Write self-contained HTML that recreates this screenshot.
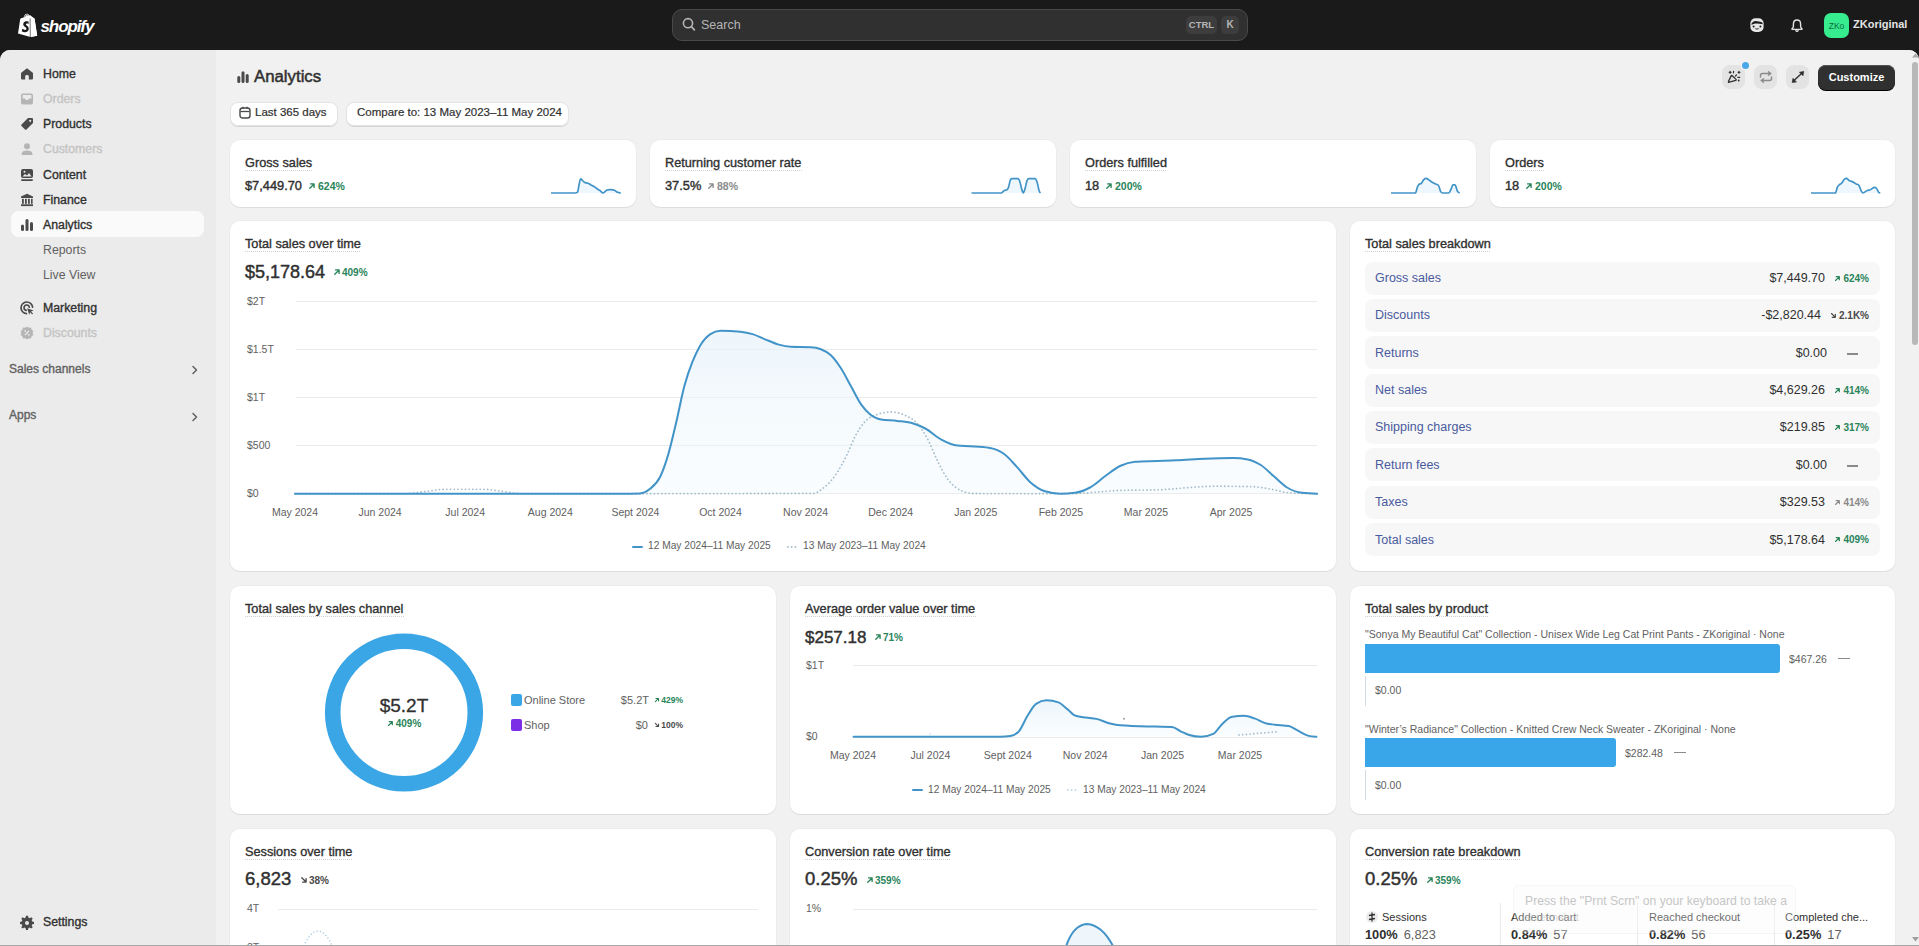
<!DOCTYPE html>
<html><head><meta charset="utf-8">
<style>
*{box-sizing:border-box;margin:0;padding:0}
html,body{width:1919px;height:946px;overflow:hidden;background:#1a1a1a;font-family:"Liberation Sans",sans-serif;color:#303030}
.abs{position:absolute}
#top{position:absolute;left:0;top:0;width:1919px;height:50px;background:#1a1a1a}
#frame{position:absolute;left:0;top:50px;width:1919px;height:896px;background:#f1f1f1;border-radius:10px 10px 0 0;overflow:hidden}
#side{position:absolute;left:0;top:0;width:216px;height:896px;background:#ebebeb}
.nav{position:absolute;left:11px;width:193px;height:26px;font-size:12.3px;-webkit-text-stroke:0.35px currentColor;font-weight:normal;color:#303030;line-height:29.2px;padding-left:32px;white-space:nowrap}
.nav.dis{color:#c4c4c4}
.nav.sub{font-weight:normal;color:#616161;-webkit-text-stroke:0}
.nav.sel{background:#fafafa;border-radius:8px}
.nav svg{position:absolute;left:9px;top:7px}
.card{position:absolute;background:#fff;border-radius:10px;box-shadow:0 1px 0 rgba(26,26,26,.07),0 0 0 1px rgba(0,0,0,.02)}
.ttl{position:absolute;font-size:13px;font-weight:bold;color:#303030;white-space:nowrap;border-bottom:1px dashed #d4d4d4;line-height:16px}
.t{position:absolute;white-space:nowrap}
.g{color:#29845a}
</style></head><body>
<div id="top">

  <svg class="abs" style="left:17px;top:13px" width="21" height="24" viewBox="0 0 21 24">
    <path d="M1 20.5 L3.2 6.2 Q3.4 5.4 4.2 5.2 L6.6 4.5 Q7.5 1 10 0.8 Q11.4 0.8 12 2.2 L13 2.2 L16.2 5.5 L17.5 5.6 L20.2 22.8 L13.5 24 Z" fill="#fff"/>
    <path d="M13 2.3 L13.2 24 L20.2 22.8 L17.5 5.6 Z" fill="#fff"/>
    <line x1="13.1" y1="5.5" x2="13.3" y2="24" stroke="#1a1a1a" stroke-width="0.6"/>
    <path d="M11.6 8.6 Q10.2 7.9 8.5 8.3 Q6 9 6.2 11.6 Q6.4 13.2 8.4 14.3 Q9.6 15 9.4 16 Q9 17.2 7.4 16.8 Q6.4 16.5 5.4 15.8 L4.7 18.2 Q6 19.3 8 19.3 Q11.4 19 11.8 16 Q12 13.9 9.8 12.6 Q8.6 11.8 8.9 11 Q9.3 10.2 10.8 10.6 L11.6 10.9 Z" fill="#1a1a1a"/>
    <path d="M7.6 4.2 Q8.3 1.8 9.9 1.6 Q10.8 1.7 11 2.6" fill="none" stroke="#1a1a1a" stroke-width="0.7"/>
  </svg>
  <div class="t" style="left:40.5px;top:16.5px;font-size:17px;font-weight:bold;font-style:italic;color:#fff;letter-spacing:-1.1px">shopify</div>
  <div class="abs" style="left:672px;top:9px;width:576px;height:32px;background:#303030;border:1px solid #4a4a4a;border-radius:10px"></div>
  <svg class="abs" style="left:682px;top:17px" width="14" height="15" viewBox="0 0 14 15"><circle cx="6" cy="6.2" r="4.6" fill="none" stroke="#b5b5b5" stroke-width="1.6"/><line x1="9.4" y1="9.6" x2="12.4" y2="12.8" stroke="#b5b5b5" stroke-width="1.7" stroke-linecap="round"/></svg>
  <div class="t" style="left:701px;top:17.5px;font-size:12.5px;color:#b5b5b5">Search</div>
  <div class="abs" style="left:1186px;top:16px;width:31px;height:18px;background:#3d3d3d;border-radius:5px;color:#b5b5b5;font-size:9.5px;font-weight:bold;text-align:center;line-height:18px">CTRL</div>
  <div class="abs" style="left:1221px;top:16px;width:18px;height:18px;background:#3d3d3d;border-radius:5px;color:#b5b5b5;font-size:10px;font-weight:bold;text-align:center;line-height:18px">K</div>
  <svg class="abs" style="left:1750px;top:18px" width="14" height="14" viewBox="0 0 14 14"><rect x="0.4" y="0.2" width="13.2" height="13.8" rx="5" fill="#e8e8e8"/><path d="M1.6 5.4 Q3.5 2.6 7 3.2 Q10.5 3.6 12.4 4.6 L12.6 6.2 Q9 5.4 5.5 5.6 Q3 5.9 1.6 7 Z" fill="#1a1a1a"/><circle cx="3.6" cy="8.4" r="1" fill="#1a1a1a"/><circle cx="10.4" cy="8.4" r="1" fill="#1a1a1a"/><path d="M4.6 10.2 Q7 12.6 9.4 10.2 Q7 10.8 4.6 10.2 Z" fill="#1a1a1a"/></svg>
  <svg class="abs" style="left:1790px;top:19px" width="14" height="14" viewBox="0 0 14 14"><path d="M7 1 Q3.4 1 3.4 5.2 V7.6 Q3.4 8.6 2.2 9.6 Q1.4 10.4 2.4 10.4 H11.6 Q12.6 10.4 11.8 9.6 Q10.6 8.6 10.6 7.6 V5.2 Q10.6 1 7 1 Z" fill="none" stroke="#e3e3e3" stroke-width="1.4" stroke-linejoin="round"/><path d="M5.6 11.2 Q7 13.6 8.4 11.2" fill="none" stroke="#e3e3e3" stroke-width="1.4"/></svg>
  <div class="abs" style="left:1824px;top:13px;width:25px;height:25px;background:#36ec8f;border-radius:7px;color:#0c6b3a;font-size:8.5px;text-align:center;line-height:26px">ZKo</div>
  <div class="t" style="left:1853px;top:18px;font-size:11px;font-weight:bold;color:#e3e3e3">ZKoriginal</div>
</div>
<div id="frame"><div id="side"></div></div>
<div class="nav " style="top:60px"><svg width="14" height="15" viewBox="0 0 14 15"><path d="M7 1.2 L1.5 5.6 Q1 6 1 6.7 V11.5 Q1 12.5 2 12.5 H5.2 V9 Q5.2 8 7 8 Q8.8 8 8.8 9 V12.5 H12 Q13 12.5 13 11.5 V6.7 Q13 6 12.5 5.6 Z" fill="#4a4a4a"/></svg>Home</div>
<div class="nav dis" style="top:85px"><svg width="14" height="15" viewBox="0 0 14 15"><path d="M3 1.5 H11 Q13 1.5 13 3.5 V10.5 Q13 12.5 11 12.5 H3 Q1 12.5 1 10.5 V3.5 Q1 1.5 3 1.5 Z M2.6 6.6 H4.8 L6 8 H8 L9.2 6.6 H11.4 V3.6 Q11.4 3.1 10.9 3.1 H3.1 Q2.6 3.1 2.6 3.6 Z" fill="#b5b5b5" fill-rule="evenodd"/></svg>Orders</div>
<div class="nav " style="top:110px"><svg width="14" height="15" viewBox="0 0 14 15"><path d="M8 1 H12 Q13 1 13 2 V6 L6.5 12.5 Q5.7 13.2 5 12.5 L1.5 9 Q0.8 8.3 1.5 7.5 Z" fill="#4a4a4a"/><circle cx="10.2" cy="3.8" r="1.1" fill="#ebebeb"/></svg>Products</div>
<div class="nav dis" style="top:135px"><svg width="14" height="15" viewBox="0 0 14 15"><circle cx="7" cy="4.2" r="3" fill="#b5b5b5"/><path d="M1.5 12.5 Q1.5 8.5 7 8.5 Q12.5 8.5 12.5 12.5 Q12.5 13 12 13 H2 Q1.5 13 1.5 12.5 Z" fill="#b5b5b5"/></svg>Customers</div>
<div class="nav " style="top:161px"><svg width="14" height="15" viewBox="0 0 14 15"><rect x="1" y="1" width="12" height="9" rx="2" fill="#4a4a4a"/><path d="M2.5 8.5 L5 6 L7 7.5 L9 5 L11.5 8.5 Z" fill="#ebebeb"/><circle cx="4.5" cy="3.8" r="1" fill="#ebebeb"/><rect x="1" y="11.3" width="12" height="1.6" rx=".8" fill="#4a4a4a"/></svg>Content</div>
<div class="nav " style="top:186px"><svg width="14" height="15" viewBox="0 0 14 15"><path d="M7 0.8 L13 3.6 V5 H1 V3.6 Z" fill="#4a4a4a"/><rect x="2" y="5.8" width="1.8" height="5" fill="#4a4a4a"/><rect x="5" y="5.8" width="1.8" height="5" fill="#4a4a4a"/><rect x="8" y="5.8" width="1.8" height="5" fill="#4a4a4a"/><rect x="11" y="5.8" width="1.6" height="5" fill="#4a4a4a"/><rect x="1" y="11.3" width="12" height="1.8" fill="#4a4a4a"/></svg>Finance</div>
<div class="nav sel" style="top:211px"><svg width="14" height="15" viewBox="0 0 14 15"><rect x="1" y="6.5" width="3" height="6.5" rx="1.5" fill="#4a4a4a"/><rect x="5.5" y="1" width="3" height="12" rx="1.5" fill="#4a4a4a"/><rect x="10" y="4" width="3" height="9" rx="1.5" fill="#4a4a4a"/></svg>Analytics</div>
<div class="nav sub" style="top:236px">Reports</div>
<div class="nav sub" style="top:261px">Live View</div>
<div class="nav " style="top:294px"><svg width="14" height="15" viewBox="0 0 14 15"><path d="M12.6 6.2 A5.8 5.8 0 1 0 6.4 12.6" fill="none" stroke="#4a4a4a" stroke-width="1.7" stroke-linecap="round"/><path d="M9.4 6.3 A2.7 2.7 0 1 0 6.3 9.4" fill="none" stroke="#4a4a4a" stroke-width="1.6" stroke-linecap="round"/><path d="M7.2 7.2 L13.6 9.4 L11 10.4 L13 12.6 L12.2 13.4 L10.2 11.2 L9.2 13.8 Z" fill="#4a4a4a"/></svg>Marketing</div>
<div class="nav dis" style="top:319px"><svg width="14" height="15" viewBox="0 0 14 15"><path d="M7 0.5 L8.8 1.8 L11 1.6 L11.6 3.7 L13.4 5 L12.6 7 L13.4 9 L11.6 10.3 L11 12.4 L8.8 12.2 L7 13.5 L5.2 12.2 L3 12.4 L2.4 10.3 L0.6 9 L1.4 7 L0.6 5 L2.4 3.7 L3 1.6 L5.2 1.8 Z" fill="#b5b5b5"/><path d="M5 9 L9 5" stroke="#ebebeb" stroke-width="1.2"/><circle cx="5.2" cy="5.2" r=".9" fill="#ebebeb"/><circle cx="8.8" cy="8.8" r=".9" fill="#ebebeb"/></svg>Discounts</div>
<div class="nav " style="top:908px"><svg width="14" height="15" viewBox="0 0 14 15"><path d="M6 0.8 H8 L8.4 2.6 L9.7 3.2 L11.3 2.2 L12.7 3.6 L11.7 5.2 L12.3 6.5 L14 6.9 V8.9 L12.3 9.3 L11.7 10.6 L12.7 12.2 L11.3 13.6 L9.7 12.6 L8.4 13.2 L8 15 H6 L5.6 13.2 L4.3 12.6 L2.7 13.6 L1.3 12.2 L2.3 10.6 L1.7 9.3 L0 8.9 V6.9 L1.7 6.5 L2.3 5.2 L1.3 3.6 L2.7 2.2 L4.3 3.2 L5.6 2.6 Z" fill="#4a4a4a"/><circle cx="7" cy="7.9" r="2" fill="#ebebeb"/></svg>Settings</div>
<div class="t" style="left:9px;top:361.5px;font-size:12px;color:#616161;-webkit-text-stroke:0.35px #616161">Sales channels</div>
<div class="t" style="left:9px;top:407.5px;font-size:12px;color:#616161;-webkit-text-stroke:0.35px #616161">Apps</div>
<svg class="abs" style="left:191px;top:365px" width="8" height="10" viewBox="0 0 8 10"><path d="M2 1.5 L5.5 5 L2 8.5" fill="none" stroke="#616161" stroke-width="1.5" stroke-linecap="round" stroke-linejoin="round"/></svg>
<svg class="abs" style="left:191px;top:412px" width="8" height="10" viewBox="0 0 8 10"><path d="M2 1.5 L5.5 5 L2 8.5" fill="none" stroke="#616161" stroke-width="1.5" stroke-linecap="round" stroke-linejoin="round"/></svg>

<svg class="abs" style="left:237px;top:71px" width="12" height="12" viewBox="0 0 12 12"><rect x="0.3" y="5" width="3" height="7" rx="1.5" fill="#4a4a4a"/><rect x="4.5" y="0.3" width="3" height="11.7" rx="1.5" fill="#4a4a4a"/><rect x="8.7" y="3" width="3" height="9" rx="1.5" fill="#4a4a4a"/></svg>
<div class="t" style="left:254px;top:69.28px;font-size:16.8px;line-height:16.8px;font-weight:normal;color:#303030;-webkit-text-stroke:0.5px #303030">Analytics</div>
<div class="abs" style="left:230px;top:102px;width:108px;height:24px;background:#fff;border-radius:8px;box-shadow:0 1px 0 #d4d4d4,0 0 0 1px #e3e3e3 inset"></div>
<svg class="abs" style="left:239px;top:106px" width="12" height="13" viewBox="0 0 12 13"><rect x="1" y="2" width="10" height="10" rx="2.5" fill="none" stroke="#4a4a4a" stroke-width="1.4"/><path d="M1.5 5.5 H10.5" stroke="#4a4a4a" stroke-width="1.3"/><path d="M4 0.8 V3 M8 0.8 V3" stroke="#4a4a4a" stroke-width="1.3"/></svg>
<div class="t" style="left:255px;top:107.27px;font-size:11.5px;line-height:11.5px;font-weight:normal;color:#303030;-webkit-text-stroke:0.2px #303030">Last 365 days</div>
<div class="abs" style="left:346px;top:102px;width:223px;height:24px;background:#fff;border-radius:8px;box-shadow:0 1px 0 #d4d4d4,0 0 0 1px #e3e3e3 inset"></div>
<div class="t" style="left:357px;top:107.27px;font-size:11.5px;line-height:11.5px;font-weight:normal;color:#303030;-webkit-text-stroke:0.2px #303030">Compare to: 13 May 2023–11 May 2024</div>
<div class="abs" style="left:1722px;top:65px;width:23px;height:24px;background:#e3e3e3;border-radius:8px"></div>
<div class="abs" style="left:1754px;top:65px;width:23px;height:24px;background:#e3e3e3;border-radius:8px"></div>
<div class="abs" style="left:1786px;top:65px;width:23px;height:24px;background:#e3e3e3;border-radius:8px"></div>
<svg class="abs" style="left:1727px;top:70px" width="14" height="14" viewBox="0 0 14 14"><path d="M2.3 12.2 Q1.1 12.6 1.5 11.4 L4.2 5.9 Q4.6 5.1 5.2 5.7 L9 9.4 Q9.6 10 8.8 10.3 Z" fill="none" stroke="#303030" stroke-width="1.3" stroke-linejoin="round"/><path d="M2.2 2.3 H4 M3.1 1.4 V3.2 M11.1 2.3 H12.9 M12 1.4 V3.2 M6.6 1.3 L6.4 2.9 M8.3 6.2 L9.5 5 M10.9 7.4 H12.7" stroke="#303030" stroke-width="1.2" stroke-linecap="round"/><circle cx="11.7" cy="10.5" r=".95" fill="#303030"/></svg>
<div class="abs" style="left:1742px;top:62px;width:7px;height:7px;background:#4ba8e8;border-radius:50%;box-shadow:0 0 0 1.5px #f1f1f1"></div>
<svg class="abs" style="left:1759px;top:71px" width="14" height="12" viewBox="0 0 14 12"><path d="M1.5 6 V4.5 Q1.5 2.5 3.5 2.5 H11.5 M9.5 0.8 L11.8 2.5 L9.5 4.2" fill="none" stroke="#8a8a8a" stroke-width="1.4" stroke-linecap="round" stroke-linejoin="round"/><path d="M12.5 6 V7.5 Q12.5 9.5 10.5 9.5 H2.5 M4.5 7.8 L2.2 9.5 L4.5 11.2" fill="none" stroke="#8a8a8a" stroke-width="1.4" stroke-linecap="round" stroke-linejoin="round"/></svg>
<svg class="abs" style="left:1791px;top:70px" width="14" height="14" viewBox="0 0 14 14"><path d="M2.4 11 L11.4 2.8" stroke="#303030" stroke-width="1.4" stroke-linecap="round"/><path d="M12.8 1.4 L8.4 2.2 L12 5.8 Z M1.2 12.6 L1.9 8.3 L5.5 11.9 Z" fill="#303030" stroke="#303030" stroke-width=".6" stroke-linejoin="round"/></svg>
<div class="abs" style="left:1818px;top:65px;width:77px;height:25px;background:#303030;border-radius:8px;box-shadow:0 1px 0 #000,inset 0 1px 0 #555"></div>
<div class="t" style="left:1656.5px;width:400px;text-align:center;top:71.69px;font-size:11px;line-height:11px;font-weight:bold;color:#ffffff;">Customize</div>
<div class="card" style="left:230px;top:140px;width:406px;height:67px"></div>
<div class="t" style="left:245px;top:156.93px;font-size:12.72px;line-height:12.72px;font-weight:normal;color:#303030;-webkit-text-stroke:0.35px #303030">Gross sales</div>
<div class="abs" style="left:245px;top:169.5px;width:68px;height:1px;background-image:linear-gradient(90deg,#d0d0d0 50%,transparent 50%);background-size:2px 1px"></div>
<div class="t" style="left:245px;top:179.66px;font-size:12.8px;line-height:12.8px;font-weight:normal;color:#303030;-webkit-text-stroke:0.4px #303030">$7,449.70</div>
<div class="t" style="left:308px;top:181.11px;font-size:10.5px;line-height:10.5px;font-weight:bold;color:#29845a;"><svg width="8" height="8" viewBox="0 0 10 10" style="vertical-align:baseline;margin-right:2px"><path d="M2.2 7.8 L7.6 2.4 M3.2 2.4 H7.6 V6.8" fill="none" stroke="#29845a" stroke-width="1.7" stroke-linecap="round" stroke-linejoin="round"/></svg>624%</div>
<div class="card" style="left:650px;top:140px;width:406px;height:67px"></div>
<div class="t" style="left:665px;top:156.93px;font-size:12.72px;line-height:12.72px;font-weight:normal;color:#303030;-webkit-text-stroke:0.35px #303030">Returning customer rate</div>
<div class="abs" style="left:665px;top:169.5px;width:137px;height:1px;background-image:linear-gradient(90deg,#d0d0d0 50%,transparent 50%);background-size:2px 1px"></div>
<div class="t" style="left:665px;top:179.66px;font-size:12.8px;line-height:12.8px;font-weight:normal;color:#303030;-webkit-text-stroke:0.4px #303030">37.5%</div>
<div class="t" style="left:707px;top:181.11px;font-size:10.5px;line-height:10.5px;font-weight:bold;color:#8a8a8a;"><svg width="8" height="8" viewBox="0 0 10 10" style="vertical-align:baseline;margin-right:2px"><path d="M2.2 7.8 L7.6 2.4 M3.2 2.4 H7.6 V6.8" fill="none" stroke="#8a8a8a" stroke-width="1.7" stroke-linecap="round" stroke-linejoin="round"/></svg>88%</div>
<div class="card" style="left:1070px;top:140px;width:406px;height:67px"></div>
<div class="t" style="left:1085px;top:156.93px;font-size:12.72px;line-height:12.72px;font-weight:normal;color:#303030;-webkit-text-stroke:0.35px #303030">Orders fulfilled</div>
<div class="abs" style="left:1085px;top:169.5px;width:82px;height:1px;background-image:linear-gradient(90deg,#d0d0d0 50%,transparent 50%);background-size:2px 1px"></div>
<div class="t" style="left:1085px;top:179.66px;font-size:12.8px;line-height:12.8px;font-weight:normal;color:#303030;-webkit-text-stroke:0.4px #303030">18</div>
<div class="t" style="left:1105px;top:181.11px;font-size:10.5px;line-height:10.5px;font-weight:bold;color:#29845a;"><svg width="8" height="8" viewBox="0 0 10 10" style="vertical-align:baseline;margin-right:2px"><path d="M2.2 7.8 L7.6 2.4 M3.2 2.4 H7.6 V6.8" fill="none" stroke="#29845a" stroke-width="1.7" stroke-linecap="round" stroke-linejoin="round"/></svg>200%</div>
<div class="card" style="left:1490px;top:140px;width:405px;height:67px"></div>
<div class="t" style="left:1505px;top:156.93px;font-size:12.72px;line-height:12.72px;font-weight:normal;color:#303030;-webkit-text-stroke:0.35px #303030">Orders</div>
<div class="abs" style="left:1505px;top:169.5px;width:39px;height:1px;background-image:linear-gradient(90deg,#d0d0d0 50%,transparent 50%);background-size:2px 1px"></div>
<div class="t" style="left:1505px;top:179.66px;font-size:12.8px;line-height:12.8px;font-weight:normal;color:#303030;-webkit-text-stroke:0.4px #303030">18</div>
<div class="t" style="left:1525px;top:181.11px;font-size:10.5px;line-height:10.5px;font-weight:bold;color:#29845a;"><svg width="8" height="8" viewBox="0 0 10 10" style="vertical-align:baseline;margin-right:2px"><path d="M2.2 7.8 L7.6 2.4 M3.2 2.4 H7.6 V6.8" fill="none" stroke="#29845a" stroke-width="1.7" stroke-linecap="round" stroke-linejoin="round"/></svg>200%</div>
<svg class="abs" style="left:550px;top:170px" width="80" height="30" viewBox="0 0 80 30"><path d="M1.0 23.0 C9.0 23.0 17.0 23.0 25.0 23.0 C25.8 23.0 26.7 22.8 27.5 22.3 C28.0 22.0 28.5 17.2 29.0 15.0 C29.5 12.7 30.1 8.8 30.6 8.8 C31.2 8.8 31.9 9.9 32.5 10.5 C33.1 11.1 33.7 11.9 34.3 12.2 C35.5 12.9 36.8 12.7 38.0 13.2 C39.4 13.8 40.7 14.9 42.1 15.6 C43.0 16.1 43.8 16.3 44.7 16.9 C45.6 17.5 46.4 18.4 47.3 19.0 C48.2 19.6 49.0 19.9 49.9 20.5 C50.9 21.2 52.0 23.0 53.0 23.0 C53.8 23.0 54.7 21.8 55.5 21.2 C56.2 20.7 57.0 19.8 57.7 19.8 C58.8 19.7 59.9 19.6 61.0 19.6 C62.3 19.6 63.7 19.9 65.0 20.5 C65.7 20.8 66.4 21.8 67.1 22.1 C68.3 22.7 69.6 22.9 70.8 23.0 L70.8 23 L1 23 Z" fill="#eaf5fc" opacity=".8"/><path d="M1.0 23.0 C9.0 23.0 17.0 23.0 25.0 23.0 C25.8 23.0 26.7 22.8 27.5 22.3 C28.0 22.0 28.5 17.2 29.0 15.0 C29.5 12.7 30.1 8.8 30.6 8.8 C31.2 8.8 31.9 9.9 32.5 10.5 C33.1 11.1 33.7 11.9 34.3 12.2 C35.5 12.9 36.8 12.7 38.0 13.2 C39.4 13.8 40.7 14.9 42.1 15.6 C43.0 16.1 43.8 16.3 44.7 16.9 C45.6 17.5 46.4 18.4 47.3 19.0 C48.2 19.6 49.0 19.9 49.9 20.5 C50.9 21.2 52.0 23.0 53.0 23.0 C53.8 23.0 54.7 21.8 55.5 21.2 C56.2 20.7 57.0 19.8 57.7 19.8 C58.8 19.7 59.9 19.6 61.0 19.6 C62.3 19.6 63.7 19.9 65.0 20.5 C65.7 20.8 66.4 21.8 67.1 22.1 C68.3 22.7 69.6 22.9 70.8 23.0" fill="none" stroke="#4294c8" stroke-width="1.7" stroke-linejoin="round"/></svg>
<svg class="abs" style="left:970px;top:170px" width="80" height="30" viewBox="0 0 80 30"><path d="M1.5 23.0 C11.4 23.0 21.3 23.0 31.2 23.0 C32.2 23.0 33.3 21.0 34.3 20.5 C35.2 20.0 36.0 20.2 36.9 19.8 C37.4 19.4 38.0 18.8 38.5 17.4 C39.2 15.7 39.8 10.4 40.5 9.6 C41.0 9.0 41.6 8.7 42.1 8.7 C44.0 8.7 45.9 8.7 47.8 8.7 C48.5 8.7 49.2 9.7 49.9 11.7 C50.4 13.2 51.0 16.6 51.5 18.4 C52.1 20.5 52.7 23.0 53.3 23.0 C53.9 23.0 54.5 20.3 55.1 18.4 C55.8 16.2 56.5 11.4 57.2 10.1 C57.7 9.1 58.3 8.7 58.8 8.7 C60.9 8.7 62.9 8.7 65.0 8.7 C65.7 8.7 66.4 10.1 67.1 12.2 C67.8 14.3 68.5 19.2 69.2 21.0 C69.6 22.1 70.1 22.6 70.5 23.0 L70.5 23 L1.5 23 Z" fill="#eaf5fc" opacity=".8"/><path d="M1.5 23.0 C11.4 23.0 21.3 23.0 31.2 23.0 C32.2 23.0 33.3 21.0 34.3 20.5 C35.2 20.0 36.0 20.2 36.9 19.8 C37.4 19.4 38.0 18.8 38.5 17.4 C39.2 15.7 39.8 10.4 40.5 9.6 C41.0 9.0 41.6 8.7 42.1 8.7 C44.0 8.7 45.9 8.7 47.8 8.7 C48.5 8.7 49.2 9.7 49.9 11.7 C50.4 13.2 51.0 16.6 51.5 18.4 C52.1 20.5 52.7 23.0 53.3 23.0 C53.9 23.0 54.5 20.3 55.1 18.4 C55.8 16.2 56.5 11.4 57.2 10.1 C57.7 9.1 58.3 8.7 58.8 8.7 C60.9 8.7 62.9 8.7 65.0 8.7 C65.7 8.7 66.4 10.1 67.1 12.2 C67.8 14.3 68.5 19.2 69.2 21.0 C69.6 22.1 70.1 22.6 70.5 23.0" fill="none" stroke="#4294c8" stroke-width="1.7" stroke-linejoin="round"/></svg>
<svg class="abs" style="left:1390px;top:170px" width="80" height="30" viewBox="0 0 80 30"><path d="M1.0 23.0 C9.1 23.0 17.3 23.0 25.4 23.0 C26.1 23.0 26.8 18.5 27.5 16.9 C28.0 15.8 28.5 14.7 29.0 14.3 C29.7 13.8 30.5 14.0 31.2 13.5 C32.1 12.9 32.9 10.4 33.8 9.6 C34.7 8.8 35.5 8.4 36.4 8.4 C37.3 8.4 38.1 9.5 39.0 10.1 C39.7 10.5 40.3 11.0 41.0 11.4 C42.8 12.5 44.5 13.4 46.3 14.3 C47.0 14.6 47.7 14.6 48.4 15.3 C49.2 16.0 49.9 20.4 50.7 21.6 C51.3 22.5 51.9 23.0 52.5 23.0 C54.6 23.0 56.7 23.0 58.8 23.0 C59.5 23.0 60.2 20.9 60.9 19.5 C61.6 18.1 62.3 14.8 63.0 14.8 C63.7 14.8 64.3 14.8 65.0 14.8 C65.9 14.8 66.7 20.4 67.6 21.6 C68.3 22.5 69.0 22.8 69.7 23.0 L69.7 23 L1 23 Z" fill="#eaf5fc" opacity=".8"/><path d="M1.0 23.0 C9.1 23.0 17.3 23.0 25.4 23.0 C26.1 23.0 26.8 18.5 27.5 16.9 C28.0 15.8 28.5 14.7 29.0 14.3 C29.7 13.8 30.5 14.0 31.2 13.5 C32.1 12.9 32.9 10.4 33.8 9.6 C34.7 8.8 35.5 8.4 36.4 8.4 C37.3 8.4 38.1 9.5 39.0 10.1 C39.7 10.5 40.3 11.0 41.0 11.4 C42.8 12.5 44.5 13.4 46.3 14.3 C47.0 14.6 47.7 14.6 48.4 15.3 C49.2 16.0 49.9 20.4 50.7 21.6 C51.3 22.5 51.9 23.0 52.5 23.0 C54.6 23.0 56.7 23.0 58.8 23.0 C59.5 23.0 60.2 20.9 60.9 19.5 C61.6 18.1 62.3 14.8 63.0 14.8 C63.7 14.8 64.3 14.8 65.0 14.8 C65.9 14.8 66.7 20.4 67.6 21.6 C68.3 22.5 69.0 22.8 69.7 23.0" fill="none" stroke="#4294c8" stroke-width="1.7" stroke-linejoin="round"/></svg>
<svg class="abs" style="left:1810px;top:170px" width="80" height="30" viewBox="0 0 80 30"><path d="M1.0 23.0 C9.1 23.0 17.3 23.0 25.4 23.0 C26.1 23.0 26.8 18.3 27.5 16.9 C28.2 15.5 28.9 15.1 29.6 14.5 C30.3 13.9 31.0 13.9 31.7 13.2 C32.6 12.3 33.4 10.0 34.3 9.3 C35.0 8.7 35.7 8.4 36.4 8.4 C37.3 8.4 38.1 9.9 39.0 10.4 C39.9 10.9 40.7 11.0 41.6 11.4 C43.2 12.1 44.7 13.2 46.3 14.0 C47.2 14.4 48.0 14.4 48.9 15.3 C49.6 16.0 50.3 19.2 51.0 20.5 C51.7 21.7 52.3 23.0 53.0 23.0 C54.4 23.0 55.8 21.0 57.2 20.5 C58.2 20.1 59.3 20.1 60.3 19.8 C61.7 19.2 63.1 17.4 64.5 17.4 C65.2 17.4 65.9 17.8 66.6 18.5 C67.3 19.2 68.0 21.9 68.7 22.4 C69.2 22.8 69.8 22.9 70.3 23.0 L70.3 23 L1 23 Z" fill="#eaf5fc" opacity=".8"/><path d="M1.0 23.0 C9.1 23.0 17.3 23.0 25.4 23.0 C26.1 23.0 26.8 18.3 27.5 16.9 C28.2 15.5 28.9 15.1 29.6 14.5 C30.3 13.9 31.0 13.9 31.7 13.2 C32.6 12.3 33.4 10.0 34.3 9.3 C35.0 8.7 35.7 8.4 36.4 8.4 C37.3 8.4 38.1 9.9 39.0 10.4 C39.9 10.9 40.7 11.0 41.6 11.4 C43.2 12.1 44.7 13.2 46.3 14.0 C47.2 14.4 48.0 14.4 48.9 15.3 C49.6 16.0 50.3 19.2 51.0 20.5 C51.7 21.7 52.3 23.0 53.0 23.0 C54.4 23.0 55.8 21.0 57.2 20.5 C58.2 20.1 59.3 20.1 60.3 19.8 C61.7 19.2 63.1 17.4 64.5 17.4 C65.2 17.4 65.9 17.8 66.6 18.5 C67.3 19.2 68.0 21.9 68.7 22.4 C69.2 22.8 69.8 22.9 70.3 23.0" fill="none" stroke="#4294c8" stroke-width="1.7" stroke-linejoin="round"/></svg>
<div class="card" style="left:230px;top:221px;width:1106px;height:350px"></div>
<div class="t" style="left:245px;top:237.93px;font-size:12.72px;line-height:12.72px;font-weight:normal;color:#303030;-webkit-text-stroke:0.35px #303030">Total sales over time</div>
<div class="abs" style="left:245px;top:250.5px;width:116px;height:1px;background-image:linear-gradient(90deg,#d0d0d0 50%,transparent 50%);background-size:2px 1px"></div>
<div class="t" style="left:245px;top:262.76px;font-size:18px;line-height:18px;font-weight:normal;color:#303030;-webkit-text-stroke:0.45px #303030">$5,178.64</div>
<div class="t" style="left:333px;top:267.54px;font-size:10px;line-height:10px;font-weight:bold;color:#29845a;"><svg width="8" height="8" viewBox="0 0 10 10" style="vertical-align:baseline;margin-right:1px"><path d="M2.2 7.8 L7.6 2.4 M3.2 2.4 H7.6 V6.8" fill="none" stroke="#29845a" stroke-width="1.7" stroke-linecap="round" stroke-linejoin="round"/></svg>409%</div>
<div class="t" style="left:247px;top:295.61px;font-size:10.5px;line-height:10.5px;font-weight:normal;color:#616161;">$2T</div>
<div class="abs" style="left:296px;top:301px;width:1021px;height:1px;background:#ebebeb"></div>
<div class="t" style="left:247px;top:343.61px;font-size:10.5px;line-height:10.5px;font-weight:normal;color:#616161;">$1.5T</div>
<div class="abs" style="left:296px;top:349px;width:1021px;height:1px;background:#ebebeb"></div>
<div class="t" style="left:247px;top:391.61px;font-size:10.5px;line-height:10.5px;font-weight:normal;color:#616161;">$1T</div>
<div class="abs" style="left:296px;top:397px;width:1021px;height:1px;background:#ebebeb"></div>
<div class="t" style="left:247px;top:439.61px;font-size:10.5px;line-height:10.5px;font-weight:normal;color:#616161;">$500</div>
<div class="abs" style="left:296px;top:445px;width:1021px;height:1px;background:#ebebeb"></div>
<div class="t" style="left:247px;top:487.61px;font-size:10.5px;line-height:10.5px;font-weight:normal;color:#616161;">$0</div>
<div class="abs" style="left:296px;top:493px;width:1021px;height:1px;background:#ebebeb"></div>
<div class="t" style="left:95.0px;width:400px;text-align:center;top:507.11px;font-size:10.5px;line-height:10.5px;font-weight:normal;color:#616161;">May 2024</div>
<div class="t" style="left:180.10000000000002px;width:400px;text-align:center;top:507.11px;font-size:10.5px;line-height:10.5px;font-weight:normal;color:#616161;">Jun 2024</div>
<div class="t" style="left:265.2px;width:400px;text-align:center;top:507.11px;font-size:10.5px;line-height:10.5px;font-weight:normal;color:#616161;">Jul 2024</div>
<div class="t" style="left:350.29999999999995px;width:400px;text-align:center;top:507.11px;font-size:10.5px;line-height:10.5px;font-weight:normal;color:#616161;">Aug 2024</div>
<div class="t" style="left:435.4px;width:400px;text-align:center;top:507.11px;font-size:10.5px;line-height:10.5px;font-weight:normal;color:#616161;">Sept 2024</div>
<div class="t" style="left:520.5px;width:400px;text-align:center;top:507.11px;font-size:10.5px;line-height:10.5px;font-weight:normal;color:#616161;">Oct 2024</div>
<div class="t" style="left:605.5999999999999px;width:400px;text-align:center;top:507.11px;font-size:10.5px;line-height:10.5px;font-weight:normal;color:#616161;">Nov 2024</div>
<div class="t" style="left:690.6999999999999px;width:400px;text-align:center;top:507.11px;font-size:10.5px;line-height:10.5px;font-weight:normal;color:#616161;">Dec 2024</div>
<div class="t" style="left:775.8px;width:400px;text-align:center;top:507.11px;font-size:10.5px;line-height:10.5px;font-weight:normal;color:#616161;">Jan 2025</div>
<div class="t" style="left:860.9000000000001px;width:400px;text-align:center;top:507.11px;font-size:10.5px;line-height:10.5px;font-weight:normal;color:#616161;">Feb 2025</div>
<div class="t" style="left:946.0px;width:400px;text-align:center;top:507.11px;font-size:10.5px;line-height:10.5px;font-weight:normal;color:#616161;">Mar 2025</div>
<div class="t" style="left:1031.1px;width:400px;text-align:center;top:507.11px;font-size:10.5px;line-height:10.5px;font-weight:normal;color:#616161;">Apr 2025</div>
<svg class="abs" style="left:0;top:0" width="1919" height="946" viewBox="0 0 1919 946">
<defs><linearGradient id="gf" x1="0" y1="0" x2="0" y2="1"><stop offset="0" stop-color="#e6f2fa" stop-opacity=".7"/><stop offset="1" stop-color="#eef7fc" stop-opacity=".3"/></linearGradient></defs>
<path d="M295.0 493.7 C403.3 493.7 511.7 493.7 620.0 493.7 C626.7 493.7 633.4 493.6 640.1 493.4 C643.4 493.3 646.8 491.6 650.1 488.8 C653.5 486.0 656.8 483.7 660.2 476.7 C662.9 471.2 665.5 463.6 668.2 454.6 C670.9 445.6 673.5 433.8 676.2 422.5 C678.9 411.1 681.6 396.4 684.3 386.3 C687.0 376.3 689.6 369.0 692.3 362.2 C695.0 355.3 697.7 349.7 700.4 345.2 C703.7 339.7 707.1 336.4 710.4 334.1 C713.7 331.8 717.1 330.7 720.4 330.7 C727.1 330.7 733.8 331.0 740.5 331.7 C744.5 332.1 748.6 332.9 752.6 334.1 C756.6 335.3 760.6 337.5 764.6 339.1 C769.3 341.0 774.0 343.3 778.7 344.6 C782.7 345.7 786.8 346.6 790.8 346.8 C797.5 347.1 804.1 346.9 810.8 347.2 C814.2 347.3 817.5 347.9 820.9 349.2 C824.2 350.5 827.6 352.0 830.9 355.2 C834.3 358.4 837.6 363.1 841.0 368.3 C844.3 373.5 847.7 380.3 851.0 386.3 C854.4 392.3 857.7 399.6 861.1 404.4 C863.8 408.2 866.4 411.1 869.1 413.5 C873.1 417.0 877.1 418.8 881.1 419.5 C886.5 420.4 891.8 420.2 897.2 420.9 C902.6 421.6 907.9 421.8 913.3 423.5 C917.3 424.7 921.3 426.4 925.3 428.5 C930.7 431.4 936.0 436.8 941.4 439.6 C946.8 442.5 952.1 445.0 957.5 445.6 C961.7 446.1 965.8 446.0 970.0 446.3 C976.3 446.7 982.5 446.8 988.8 447.8 C993.8 448.6 998.8 450.2 1003.8 453.8 C1008.2 456.9 1012.5 462.2 1016.9 466.9 C1021.3 471.6 1025.6 478.0 1030.0 481.9 C1035.0 486.4 1040.0 489.7 1045.0 491.3 C1050.0 492.9 1055.0 493.7 1060.0 493.7 C1065.0 493.7 1070.0 493.4 1075.0 492.8 C1080.0 492.2 1085.0 490.2 1090.0 487.5 C1095.0 484.8 1100.0 479.9 1105.0 476.3 C1110.0 472.7 1115.0 468.4 1120.0 466.0 C1125.0 463.6 1130.1 462.1 1135.1 461.7 C1142.6 461.2 1150.1 461.2 1157.6 460.9 C1163.9 460.7 1170.1 460.6 1176.4 460.3 C1185.8 459.9 1195.1 459.2 1204.5 458.8 C1213.9 458.4 1223.3 458.1 1232.7 458.1 C1237.7 458.1 1242.7 458.5 1247.7 459.4 C1252.1 460.2 1256.4 462.2 1260.8 465.0 C1265.2 467.8 1269.5 472.6 1273.9 476.3 C1278.3 480.1 1282.7 484.8 1287.1 487.5 C1292.1 490.6 1297.1 492.2 1302.1 492.8 C1307.1 493.4 1312.1 493.6 1317.1 493.7 L1316 493.5 L295 493.5 Z" fill="url(#gf)" transform="translate(0,0)" style="clip-path:inset(0)"/>
<path d="M295.0 493.7 C331.7 493.7 368.3 493.7 405.0 493.7 C411.7 493.7 418.3 492.2 425.0 491.5 C431.9 490.8 438.8 489.3 445.7 489.3 C458.2 489.3 470.7 489.3 483.2 489.3 C489.8 489.3 496.4 490.7 503.0 491.5 C509.0 492.2 515.0 493.7 521.0 493.7 C618.3 493.7 715.5 493.6 812.8 493.4 C816.8 493.4 820.9 490.2 824.9 486.8 C828.9 483.4 833.0 478.8 837.0 472.7 C840.3 467.6 843.7 461.4 847.0 454.6 C849.7 449.1 852.3 441.7 855.0 436.6 C858.4 430.1 861.7 425.1 865.1 421.5 C869.1 417.2 873.1 415.9 877.1 414.5 C881.8 412.8 886.5 412.0 891.2 412.0 C895.9 412.0 900.6 413.3 905.3 415.5 C909.3 417.4 913.3 419.0 917.3 423.5 C920.7 427.3 924.0 432.4 927.4 438.6 C930.7 444.8 934.1 454.0 937.4 460.7 C940.7 467.4 944.1 474.0 947.4 478.7 C952.1 485.3 956.8 488.7 961.5 490.8 C965.5 492.6 969.6 493.5 973.6 493.5 C1006.7 493.6 1039.9 493.7 1073.0 493.7 C1082.3 493.7 1091.7 492.3 1101.0 491.7 C1107.3 491.3 1113.7 490.6 1120.0 490.4 C1132.5 490.0 1145.1 490.2 1157.6 489.8 C1170.1 489.4 1182.5 487.9 1195.0 487.2 C1201.3 486.8 1207.7 486.2 1214.0 486.2 C1226.5 486.2 1238.9 486.3 1251.4 486.6 C1257.6 486.7 1263.8 488.0 1270.0 489.0 C1276.3 490.0 1282.7 492.4 1289.0 492.8 C1298.3 493.4 1307.7 493.6 1317.0 493.7" fill="none" stroke="#a3bccb" stroke-width="1.8" stroke-dasharray="0.01 3.7" stroke-linecap="round"/>
<path d="M295.0 493.7 C403.3 493.7 511.7 493.7 620.0 493.7 C626.7 493.7 633.4 493.6 640.1 493.4 C643.4 493.3 646.8 491.6 650.1 488.8 C653.5 486.0 656.8 483.7 660.2 476.7 C662.9 471.2 665.5 463.6 668.2 454.6 C670.9 445.6 673.5 433.8 676.2 422.5 C678.9 411.1 681.6 396.4 684.3 386.3 C687.0 376.3 689.6 369.0 692.3 362.2 C695.0 355.3 697.7 349.7 700.4 345.2 C703.7 339.7 707.1 336.4 710.4 334.1 C713.7 331.8 717.1 330.7 720.4 330.7 C727.1 330.7 733.8 331.0 740.5 331.7 C744.5 332.1 748.6 332.9 752.6 334.1 C756.6 335.3 760.6 337.5 764.6 339.1 C769.3 341.0 774.0 343.3 778.7 344.6 C782.7 345.7 786.8 346.6 790.8 346.8 C797.5 347.1 804.1 346.9 810.8 347.2 C814.2 347.3 817.5 347.9 820.9 349.2 C824.2 350.5 827.6 352.0 830.9 355.2 C834.3 358.4 837.6 363.1 841.0 368.3 C844.3 373.5 847.7 380.3 851.0 386.3 C854.4 392.3 857.7 399.6 861.1 404.4 C863.8 408.2 866.4 411.1 869.1 413.5 C873.1 417.0 877.1 418.8 881.1 419.5 C886.5 420.4 891.8 420.2 897.2 420.9 C902.6 421.6 907.9 421.8 913.3 423.5 C917.3 424.7 921.3 426.4 925.3 428.5 C930.7 431.4 936.0 436.8 941.4 439.6 C946.8 442.5 952.1 445.0 957.5 445.6 C961.7 446.1 965.8 446.0 970.0 446.3 C976.3 446.7 982.5 446.8 988.8 447.8 C993.8 448.6 998.8 450.2 1003.8 453.8 C1008.2 456.9 1012.5 462.2 1016.9 466.9 C1021.3 471.6 1025.6 478.0 1030.0 481.9 C1035.0 486.4 1040.0 489.7 1045.0 491.3 C1050.0 492.9 1055.0 493.7 1060.0 493.7 C1065.0 493.7 1070.0 493.4 1075.0 492.8 C1080.0 492.2 1085.0 490.2 1090.0 487.5 C1095.0 484.8 1100.0 479.9 1105.0 476.3 C1110.0 472.7 1115.0 468.4 1120.0 466.0 C1125.0 463.6 1130.1 462.1 1135.1 461.7 C1142.6 461.2 1150.1 461.2 1157.6 460.9 C1163.9 460.7 1170.1 460.6 1176.4 460.3 C1185.8 459.9 1195.1 459.2 1204.5 458.8 C1213.9 458.4 1223.3 458.1 1232.7 458.1 C1237.7 458.1 1242.7 458.5 1247.7 459.4 C1252.1 460.2 1256.4 462.2 1260.8 465.0 C1265.2 467.8 1269.5 472.6 1273.9 476.3 C1278.3 480.1 1282.7 484.8 1287.1 487.5 C1292.1 490.6 1297.1 492.2 1302.1 492.8 C1307.1 493.4 1312.1 493.6 1317.1 493.7" fill="none" stroke="#4294c8" stroke-width="2" stroke-linecap="round"/>
</svg>
<div class="abs" style="left:632px;top:546px;width:11px;height:2px;background:#4294c8;border-radius:1px"></div>
<div class="t" style="left:648px;top:541.37px;font-size:10.2px;line-height:10.2px;font-weight:normal;color:#616161;">12 May 2024–11 May 2025</div>
<svg class="abs" style="left:787px;top:545px" width="12" height="4"><path d="M1 2 H11" stroke="#a3bccb" stroke-width="1.8" stroke-dasharray="0.01 3.7" stroke-linecap="round"/></svg>
<div class="t" style="left:803px;top:541.37px;font-size:10.2px;line-height:10.2px;font-weight:normal;color:#616161;">13 May 2023–11 May 2024</div>
<div class="card" style="left:1350px;top:221px;width:545px;height:350px"></div>
<div class="t" style="left:1365px;top:237.93px;font-size:12.72px;line-height:12.72px;font-weight:normal;color:#303030;-webkit-text-stroke:0.35px #303030">Total sales breakdown</div>
<div class="abs" style="left:1365px;top:250.5px;width:126px;height:1px;background-image:linear-gradient(90deg,#d0d0d0 50%,transparent 50%);background-size:2px 1px"></div>
<div class="abs" style="left:1365px;top:262px;width:515px;height:33px;background:#f7f7f7;border-radius:8px"></div>
<div class="t" style="left:1375px;top:271.92px;font-size:12.5px;line-height:12.5px;font-weight:normal;color:#4a5a9e;">Gross sales</div>
<div class="t" style="right:50px;text-align:right;top:273.54px;font-size:10px;line-height:10px;font-weight:bold;color:#29845a;"><svg width="7" height="7" viewBox="0 0 10 10" style="vertical-align:baseline;margin-right:2px"><path d="M2.2 7.8 L7.6 2.4 M3.2 2.4 H7.6 V6.8" fill="none" stroke="#29845a" stroke-width="1.7" stroke-linecap="round" stroke-linejoin="round"/></svg>624%</div>
<div class="t" style="right:94px;text-align:right;top:271.92px;font-size:12.5px;line-height:12.5px;font-weight:normal;color:#303030;">$7,449.70</div>
<div class="abs" style="left:1365px;top:299px;width:515px;height:33px;background:#f7f7f7;border-radius:8px"></div>
<div class="t" style="left:1375px;top:309.29px;font-size:12.5px;line-height:12.5px;font-weight:normal;color:#4a5a9e;">Discounts</div>
<div class="t" style="right:50px;text-align:right;top:310.91px;font-size:10px;line-height:10px;font-weight:bold;color:#4a4a4a;"><svg width="7" height="7" viewBox="0 0 10 10" style="vertical-align:baseline;margin-right:2px"><path d="M2.2 2.2 L7.6 7.6 M3.2 7.6 H7.6 V3.2" fill="none" stroke="#4a4a4a" stroke-width="1.7" stroke-linecap="round" stroke-linejoin="round"/></svg>2.1K%</div>
<div class="t" style="right:98px;text-align:right;top:309.29px;font-size:12.5px;line-height:12.5px;font-weight:normal;color:#303030;">-$2,820.44</div>
<div class="abs" style="left:1365px;top:336px;width:515px;height:33px;background:#f7f7f7;border-radius:8px"></div>
<div class="t" style="left:1375px;top:346.66px;font-size:12.5px;line-height:12.5px;font-weight:normal;color:#4a5a9e;">Returns</div>
<div class="t" style="right:92px;text-align:right;top:346.66px;font-size:12.5px;line-height:12.5px;font-weight:normal;color:#303030;">$0.00</div>
<div class="abs" style="left:1847px;top:353px;width:11px;height:1.5px;background:#8a8a8a"></div>
<div class="abs" style="left:1365px;top:374px;width:515px;height:33px;background:#f7f7f7;border-radius:8px"></div>
<div class="t" style="left:1375px;top:384.03px;font-size:12.5px;line-height:12.5px;font-weight:normal;color:#4a5a9e;">Net sales</div>
<div class="t" style="right:50px;text-align:right;top:385.65px;font-size:10px;line-height:10px;font-weight:bold;color:#29845a;"><svg width="7" height="7" viewBox="0 0 10 10" style="vertical-align:baseline;margin-right:2px"><path d="M2.2 7.8 L7.6 2.4 M3.2 2.4 H7.6 V6.8" fill="none" stroke="#29845a" stroke-width="1.7" stroke-linecap="round" stroke-linejoin="round"/></svg>414%</div>
<div class="t" style="right:94px;text-align:right;top:384.03px;font-size:12.5px;line-height:12.5px;font-weight:normal;color:#303030;">$4,629.26</div>
<div class="abs" style="left:1365px;top:411px;width:515px;height:33px;background:#f7f7f7;border-radius:8px"></div>
<div class="t" style="left:1375px;top:421.40px;font-size:12.5px;line-height:12.5px;font-weight:normal;color:#4a5a9e;">Shipping charges</div>
<div class="t" style="right:50px;text-align:right;top:423.02px;font-size:10px;line-height:10px;font-weight:bold;color:#29845a;"><svg width="7" height="7" viewBox="0 0 10 10" style="vertical-align:baseline;margin-right:2px"><path d="M2.2 7.8 L7.6 2.4 M3.2 2.4 H7.6 V6.8" fill="none" stroke="#29845a" stroke-width="1.7" stroke-linecap="round" stroke-linejoin="round"/></svg>317%</div>
<div class="t" style="right:94px;text-align:right;top:421.40px;font-size:12.5px;line-height:12.5px;font-weight:normal;color:#303030;">$219.85</div>
<div class="abs" style="left:1365px;top:448px;width:515px;height:33px;background:#f7f7f7;border-radius:8px"></div>
<div class="t" style="left:1375px;top:458.77px;font-size:12.5px;line-height:12.5px;font-weight:normal;color:#4a5a9e;">Return fees</div>
<div class="t" style="right:92px;text-align:right;top:458.77px;font-size:12.5px;line-height:12.5px;font-weight:normal;color:#303030;">$0.00</div>
<div class="abs" style="left:1847px;top:465px;width:11px;height:1.5px;background:#8a8a8a"></div>
<div class="abs" style="left:1365px;top:486px;width:515px;height:33px;background:#f7f7f7;border-radius:8px"></div>
<div class="t" style="left:1375px;top:496.14px;font-size:12.5px;line-height:12.5px;font-weight:normal;color:#4a5a9e;">Taxes</div>
<div class="t" style="right:50px;text-align:right;top:497.75px;font-size:10px;line-height:10px;font-weight:bold;color:#8a8a8a;"><svg width="7" height="7" viewBox="0 0 10 10" style="vertical-align:baseline;margin-right:2px"><path d="M2.2 7.8 L7.6 2.4 M3.2 2.4 H7.6 V6.8" fill="none" stroke="#8a8a8a" stroke-width="1.7" stroke-linecap="round" stroke-linejoin="round"/></svg>414%</div>
<div class="t" style="right:94px;text-align:right;top:496.14px;font-size:12.5px;line-height:12.5px;font-weight:normal;color:#303030;">$329.53</div>
<div class="abs" style="left:1365px;top:523px;width:515px;height:33px;background:#f7f7f7;border-radius:8px"></div>
<div class="t" style="left:1375px;top:533.51px;font-size:12.5px;line-height:12.5px;font-weight:normal;color:#4a5a9e;">Total sales</div>
<div class="t" style="right:50px;text-align:right;top:535.12px;font-size:10px;line-height:10px;font-weight:bold;color:#29845a;"><svg width="7" height="7" viewBox="0 0 10 10" style="vertical-align:baseline;margin-right:2px"><path d="M2.2 7.8 L7.6 2.4 M3.2 2.4 H7.6 V6.8" fill="none" stroke="#29845a" stroke-width="1.7" stroke-linecap="round" stroke-linejoin="round"/></svg>409%</div>
<div class="t" style="right:94px;text-align:right;top:533.51px;font-size:12.5px;line-height:12.5px;font-weight:normal;color:#303030;">$5,178.64</div>
<div class="card" style="left:230px;top:586px;width:546px;height:228px"></div>
<div class="card" style="left:790px;top:586px;width:546px;height:228px"></div>
<div class="card" style="left:1350px;top:586px;width:545px;height:228px"></div>
<div class="t" style="left:245px;top:602.93px;font-size:12.72px;line-height:12.72px;font-weight:normal;color:#303030;-webkit-text-stroke:0.35px #303030">Total sales by sales channel</div>
<div class="abs" style="left:245px;top:615.5px;width:159px;height:1px;background-image:linear-gradient(90deg,#d0d0d0 50%,transparent 50%);background-size:2px 1px"></div>
<div class="t" style="left:805px;top:602.93px;font-size:12.72px;line-height:12.72px;font-weight:normal;color:#303030;-webkit-text-stroke:0.35px #303030">Average order value over time</div>
<div class="abs" style="left:805px;top:615.5px;width:171px;height:1px;background-image:linear-gradient(90deg,#d0d0d0 50%,transparent 50%);background-size:2px 1px"></div>
<div class="t" style="left:1365px;top:602.93px;font-size:12.72px;line-height:12.72px;font-weight:normal;color:#303030;-webkit-text-stroke:0.35px #303030">Total sales by product</div>
<div class="abs" style="left:1365px;top:615.5px;width:124px;height:1px;background-image:linear-gradient(90deg,#d0d0d0 50%,transparent 50%);background-size:2px 1px"></div>
<svg class="abs" style="left:304px;top:612px" width="200" height="200" viewBox="0 0 200 200"><circle cx="100" cy="100.5" r="71.3" fill="none" stroke="#3aa6e6" stroke-width="15.6"/></svg>
<div class="t" style="left:204px;width:400px;text-align:center;top:695.92px;font-size:19px;line-height:19px;font-weight:bold;color:#303030;font-weight:normal;-webkit-text-stroke:0.3px #303030">$5.2T</div>
<div class="t" style="left:204px;width:400px;text-align:center;top:718.53px;font-size:10px;line-height:10px;font-weight:bold;color:#29845a;"><svg width="7" height="7" viewBox="0 0 10 10" style="vertical-align:baseline;margin-right:2px"><path d="M2.2 7.8 L7.6 2.4 M3.2 2.4 H7.6 V6.8" fill="none" stroke="#29845a" stroke-width="1.7" stroke-linecap="round" stroke-linejoin="round"/></svg>409%</div>
<div class="abs" style="left:511px;top:694px;width:11px;height:12px;background:#3aa6e6;border-radius:2px"></div>
<div class="abs" style="left:511px;top:719px;width:11px;height:12px;background:#7b2ee6;border-radius:2px"></div>
<div class="t" style="left:524px;top:694.69px;font-size:11px;line-height:11px;font-weight:normal;color:#616161;">Online Store</div>
<div class="t" style="left:524px;top:719.69px;font-size:11px;line-height:11px;font-weight:normal;color:#616161;">Shop</div>
<div class="t" style="right:1270px;text-align:right;top:694.69px;font-size:11px;line-height:11px;font-weight:normal;color:#616161;">$5.2T</div>
<div class="t" style="right:1236px;text-align:right;top:696.30px;font-size:8.5px;line-height:8.5px;font-weight:bold;color:#29845a;"><svg width="6" height="6" viewBox="0 0 10 10" style="vertical-align:baseline;margin-right:1px"><path d="M2.2 7.8 L7.6 2.4 M3.2 2.4 H7.6 V6.8" fill="none" stroke="#29845a" stroke-width="1.7" stroke-linecap="round" stroke-linejoin="round"/></svg>429%</div>
<div class="t" style="right:1271px;text-align:right;top:719.69px;font-size:11px;line-height:11px;font-weight:normal;color:#616161;">$0</div>
<div class="t" style="right:1236px;text-align:right;top:721.30px;font-size:8.5px;line-height:8.5px;font-weight:bold;color:#4a4a4a;"><svg width="6" height="6" viewBox="0 0 10 10" style="vertical-align:baseline;margin-right:1px"><path d="M2.2 2.2 L7.6 7.6 M3.2 7.6 H7.6 V3.2" fill="none" stroke="#4a4a4a" stroke-width="1.7" stroke-linecap="round" stroke-linejoin="round"/></svg>100%</div>
<div class="t" style="left:805px;top:628.61px;font-size:17px;line-height:17px;font-weight:normal;color:#303030;-webkit-text-stroke:0.45px #303030">$257.18</div>
<div class="t" style="left:874px;top:632.53px;font-size:10px;line-height:10px;font-weight:bold;color:#29845a;"><svg width="8" height="8" viewBox="0 0 10 10" style="vertical-align:baseline;margin-right:1px"><path d="M2.2 7.8 L7.6 2.4 M3.2 2.4 H7.6 V6.8" fill="none" stroke="#29845a" stroke-width="1.7" stroke-linecap="round" stroke-linejoin="round"/></svg>71%</div>
<div class="t" style="left:806px;top:660.11px;font-size:10.5px;line-height:10.5px;font-weight:normal;color:#616161;">$1T</div>
<div class="t" style="left:806px;top:731.11px;font-size:10.5px;line-height:10.5px;font-weight:normal;color:#616161;">$0</div>
<div class="abs" style="left:853px;top:665px;width:464px;height:1px;background:#ebebeb"></div>
<div class="abs" style="left:853px;top:737px;width:464px;height:1px;background:#ebebeb"></div>
<div class="t" style="left:653.0px;width:400px;text-align:center;top:750.11px;font-size:10.5px;line-height:10.5px;font-weight:normal;color:#616161;">May 2024</div>
<div class="t" style="left:730.4px;width:400px;text-align:center;top:750.11px;font-size:10.5px;line-height:10.5px;font-weight:normal;color:#616161;">Jul 2024</div>
<div class="t" style="left:807.8px;width:400px;text-align:center;top:750.11px;font-size:10.5px;line-height:10.5px;font-weight:normal;color:#616161;">Sept 2024</div>
<div class="t" style="left:885.2px;width:400px;text-align:center;top:750.11px;font-size:10.5px;line-height:10.5px;font-weight:normal;color:#616161;">Nov 2024</div>
<div class="t" style="left:962.5999999999999px;width:400px;text-align:center;top:750.11px;font-size:10.5px;line-height:10.5px;font-weight:normal;color:#616161;">Jan 2025</div>
<div class="t" style="left:1040.0px;width:400px;text-align:center;top:750.11px;font-size:10.5px;line-height:10.5px;font-weight:normal;color:#616161;">Mar 2025</div>
<svg class="abs" style="left:0;top:0" width="1919" height="946" viewBox="0 0 1919 946">
<defs><linearGradient id="gf2" x1="0" y1="0" x2="0" y2="1"><stop offset="0" stop-color="#e3f1fa" stop-opacity=".7"/><stop offset="1" stop-color="#eef7fc" stop-opacity=".25"/></linearGradient></defs>
<path d="M853.6 736.8 C902.4 736.8 951.2 736.8 1000.0 736.8 C1003.4 736.8 1006.9 736.6 1010.3 736.1 C1013.2 735.7 1016.0 734.5 1018.9 731.3 C1021.8 728.1 1024.6 720.4 1027.5 715.8 C1030.4 711.2 1033.2 705.7 1036.1 703.8 C1039.5 701.5 1043.0 700.3 1046.4 700.3 C1050.4 700.3 1054.5 701.0 1058.5 702.4 C1061.4 703.4 1064.2 706.7 1067.1 708.9 C1070.0 711.1 1072.8 714.9 1075.7 715.8 C1079.1 716.9 1082.6 717.0 1086.0 717.5 C1089.4 718.0 1092.9 718.1 1096.3 718.9 C1100.9 719.9 1105.5 722.4 1110.1 723.5 C1113.5 724.3 1117.0 725.0 1120.4 725.3 C1131.9 726.2 1143.3 726.3 1154.8 726.6 C1160.5 726.8 1166.3 726.7 1172.0 727.0 C1174.9 727.1 1177.7 730.0 1180.6 731.3 C1183.5 732.6 1186.3 734.1 1189.2 735.0 C1193.2 736.2 1197.2 736.8 1201.2 736.8 C1205.2 736.8 1209.2 735.8 1213.2 733.9 C1216.1 732.5 1218.9 727.1 1221.8 724.4 C1225.3 721.1 1228.7 717.2 1232.2 716.7 C1236.2 716.1 1240.2 715.8 1244.2 715.8 C1247.6 715.8 1251.1 717.3 1254.5 718.4 C1258.5 719.7 1262.5 722.5 1266.5 723.5 C1269.4 724.2 1272.2 724.3 1275.1 724.7 C1279.7 725.3 1284.3 725.2 1288.9 726.1 C1291.8 726.7 1294.6 729.0 1297.5 730.4 C1300.9 732.1 1304.4 734.6 1307.8 735.6 C1310.7 736.4 1313.5 736.6 1316.4 736.8 L853.6 736.7 Z" fill="url(#gf2)"/>
<path d="M1239 735 L1277 731.8" fill="none" stroke="#a3bccb" stroke-width="1.8" stroke-dasharray="0.01 3.7" stroke-linecap="round"/>
<circle cx="930" cy="734" r=".8" fill="#b9d6e6"/><circle cx="1124" cy="718.7" r="1" fill="#a0a0a0"/>
<path d="M853.6 736.8 C902.4 736.8 951.2 736.8 1000.0 736.8 C1003.4 736.8 1006.9 736.6 1010.3 736.1 C1013.2 735.7 1016.0 734.5 1018.9 731.3 C1021.8 728.1 1024.6 720.4 1027.5 715.8 C1030.4 711.2 1033.2 705.7 1036.1 703.8 C1039.5 701.5 1043.0 700.3 1046.4 700.3 C1050.4 700.3 1054.5 701.0 1058.5 702.4 C1061.4 703.4 1064.2 706.7 1067.1 708.9 C1070.0 711.1 1072.8 714.9 1075.7 715.8 C1079.1 716.9 1082.6 717.0 1086.0 717.5 C1089.4 718.0 1092.9 718.1 1096.3 718.9 C1100.9 719.9 1105.5 722.4 1110.1 723.5 C1113.5 724.3 1117.0 725.0 1120.4 725.3 C1131.9 726.2 1143.3 726.3 1154.8 726.6 C1160.5 726.8 1166.3 726.7 1172.0 727.0 C1174.9 727.1 1177.7 730.0 1180.6 731.3 C1183.5 732.6 1186.3 734.1 1189.2 735.0 C1193.2 736.2 1197.2 736.8 1201.2 736.8 C1205.2 736.8 1209.2 735.8 1213.2 733.9 C1216.1 732.5 1218.9 727.1 1221.8 724.4 C1225.3 721.1 1228.7 717.2 1232.2 716.7 C1236.2 716.1 1240.2 715.8 1244.2 715.8 C1247.6 715.8 1251.1 717.3 1254.5 718.4 C1258.5 719.7 1262.5 722.5 1266.5 723.5 C1269.4 724.2 1272.2 724.3 1275.1 724.7 C1279.7 725.3 1284.3 725.2 1288.9 726.1 C1291.8 726.7 1294.6 729.0 1297.5 730.4 C1300.9 732.1 1304.4 734.6 1307.8 735.6 C1310.7 736.4 1313.5 736.6 1316.4 736.8" fill="none" stroke="#4294c8" stroke-width="2" stroke-linecap="round"/>
</svg>
<div class="abs" style="left:912px;top:789px;width:11px;height:2px;background:#4294c8;border-radius:1px"></div>
<div class="t" style="left:928px;top:785.37px;font-size:10.2px;line-height:10.2px;font-weight:normal;color:#616161;">12 May 2024–11 May 2025</div>
<svg class="abs" style="left:1067px;top:788px" width="12" height="4"><path d="M1 2 H11" stroke="#b9d6e6" stroke-width="1.8" stroke-dasharray="0.01 3.7" stroke-linecap="round"/></svg>
<div class="t" style="left:1083px;top:785.37px;font-size:10.2px;line-height:10.2px;font-weight:normal;color:#616161;">13 May 2023–11 May 2024</div>
<div class="t" style="left:1365px;top:629.11px;font-size:10.5px;line-height:10.5px;font-weight:normal;color:#616161;">"Sonya My Beautiful Cat" Collection - Unisex Wide Leg Cat Print Pants - ZKoriginal · None</div>
<div class="abs" style="left:1365px;top:644px;width:415px;height:29px;background:#38a6e8;border-radius:0 3px 3px 0"></div>
<div class="t" style="left:1789px;top:654.11px;font-size:10.5px;line-height:10.5px;font-weight:normal;color:#616161;">$467.26</div>
<div class="abs" style="left:1838px;top:658px;width:12px;height:1.2px;background:#8a8a8a"></div>
<div class="abs" style="left:1365px;top:676px;width:1px;height:30px;background:#d3dbe2"></div>
<div class="t" style="left:1375px;top:685.11px;font-size:10.5px;line-height:10.5px;font-weight:normal;color:#616161;">$0.00</div>
<div class="t" style="left:1365px;top:724.11px;font-size:10.5px;line-height:10.5px;font-weight:normal;color:#616161;">"Winter’s Radiance" Collection - Knitted Crew Neck Sweater - ZKoriginal · None</div>
<div class="abs" style="left:1365px;top:738px;width:251px;height:29px;background:#38a6e8;border-radius:0 3px 3px 0"></div>
<div class="t" style="left:1625px;top:748.11px;font-size:10.5px;line-height:10.5px;font-weight:normal;color:#616161;">$282.48</div>
<div class="abs" style="left:1674px;top:752px;width:12px;height:1.2px;background:#8a8a8a"></div>
<div class="abs" style="left:1365px;top:770px;width:1px;height:30px;background:#d3dbe2"></div>
<div class="t" style="left:1375px;top:780.11px;font-size:10.5px;line-height:10.5px;font-weight:normal;color:#616161;">$0.00</div>
<div class="card" style="left:230px;top:829px;width:546px;height:131px"></div>
<div class="card" style="left:790px;top:829px;width:546px;height:131px"></div>
<div class="card" style="left:1350px;top:829px;width:545px;height:131px"></div>
<div class="t" style="left:245px;top:845.93px;font-size:12.72px;line-height:12.72px;font-weight:normal;color:#303030;-webkit-text-stroke:0.35px #303030">Sessions over time</div>
<div class="abs" style="left:245px;top:858.5px;width:108px;height:1px;background-image:linear-gradient(90deg,#d0d0d0 50%,transparent 50%);background-size:2px 1px"></div>
<div class="t" style="left:805px;top:845.93px;font-size:12.72px;line-height:12.72px;font-weight:normal;color:#303030;-webkit-text-stroke:0.35px #303030">Conversion rate over time</div>
<div class="abs" style="left:805px;top:858.5px;width:146px;height:1px;background-image:linear-gradient(90deg,#d0d0d0 50%,transparent 50%);background-size:2px 1px"></div>
<div class="t" style="left:1365px;top:845.93px;font-size:12.72px;line-height:12.72px;font-weight:normal;color:#303030;-webkit-text-stroke:0.35px #303030">Conversion rate breakdown</div>
<div class="abs" style="left:1365px;top:858.5px;width:156px;height:1px;background-image:linear-gradient(90deg,#d0d0d0 50%,transparent 50%);background-size:2px 1px"></div>
<div class="t" style="left:245px;top:870.34px;font-size:18.5px;line-height:18.5px;font-weight:normal;color:#303030;-webkit-text-stroke:0.45px #303030">6,823</div>
<div class="t" style="left:300px;top:875.53px;font-size:10px;line-height:10px;font-weight:bold;color:#4a4a4a;"><svg width="8" height="8" viewBox="0 0 10 10" style="vertical-align:baseline;margin-right:1px"><path d="M2.2 2.2 L7.6 7.6 M3.2 7.6 H7.6 V3.2" fill="none" stroke="#4a4a4a" stroke-width="1.7" stroke-linecap="round" stroke-linejoin="round"/></svg>38%</div>
<div class="t" style="left:805px;top:870.34px;font-size:18.5px;line-height:18.5px;font-weight:normal;color:#303030;-webkit-text-stroke:0.45px #303030">0.25%</div>
<div class="t" style="left:866px;top:875.53px;font-size:10px;line-height:10px;font-weight:bold;color:#29845a;"><svg width="8" height="8" viewBox="0 0 10 10" style="vertical-align:baseline;margin-right:1px"><path d="M2.2 7.8 L7.6 2.4 M3.2 2.4 H7.6 V6.8" fill="none" stroke="#29845a" stroke-width="1.7" stroke-linecap="round" stroke-linejoin="round"/></svg>359%</div>
<div class="t" style="left:1365px;top:870.34px;font-size:18.5px;line-height:18.5px;font-weight:normal;color:#303030;-webkit-text-stroke:0.45px #303030">0.25%</div>
<div class="t" style="left:1426px;top:875.53px;font-size:10px;line-height:10px;font-weight:bold;color:#29845a;"><svg width="8" height="8" viewBox="0 0 10 10" style="vertical-align:baseline;margin-right:1px"><path d="M2.2 7.8 L7.6 2.4 M3.2 2.4 H7.6 V6.8" fill="none" stroke="#29845a" stroke-width="1.7" stroke-linecap="round" stroke-linejoin="round"/></svg>359%</div>
<div class="t" style="left:247px;top:903.11px;font-size:10.5px;line-height:10.5px;font-weight:normal;color:#616161;">4T</div>
<div class="abs" style="left:278px;top:909px;width:480px;height:1px;background:#ebebeb"></div>
<div class="t" style="left:247px;top:942.11px;font-size:10.5px;line-height:10.5px;font-weight:normal;color:#616161;">3T</div>
<div class="t" style="left:806px;top:903.11px;font-size:10.5px;line-height:10.5px;font-weight:normal;color:#616161;">1%</div>
<div class="abs" style="left:853px;top:909px;width:464px;height:1px;background:#ebebeb"></div>
<svg class="abs" style="left:0;top:0" width="1919" height="946" viewBox="0 0 1919 946">
<path d="M301 952 Q318 910 335 952" fill="none" stroke="#a9cde0" stroke-width="1.5" stroke-dasharray="0.01 3.4" stroke-linecap="round"/>
<path d="M1062 960 Q1070 925 1087 924 Q1102 925 1113 946 L1113 960 Z" fill="#eef6fc"/>
<path d="M1065 950 Q1072 925 1087 924 Q1102 925 1113 946" fill="none" stroke="#4294c8" stroke-width="2"/>
</svg>
<svg class="abs" style="left:1366px;top:910px" width="12" height="14" viewBox="0 0 12 14"><circle cx="6" cy="7" r="6" fill="#ebebeb"/><path d="M6 2.5 V11.5 M3 5.5 L9 4.5 M3 9.5 L9 8.5" stroke="#303030" stroke-width="1.3"/></svg>
<div class="t" style="left:1382px;top:911.69px;font-size:11px;line-height:11px;font-weight:normal;color:#303030;">Sessions</div>
<div class="t" style="left:1365px;top:929.16px;font-size:12.8px;line-height:12.8px;font-weight:normal;color:#303030;"><b>100%</b><span style="color:#616161;margin-left:6px">6,823</span></div>
<div class="abs" style="left:1500px;top:903px;width:1px;height:43px;background:#ebebeb"></div>
<div class="abs" style="left:1637px;top:903px;width:1px;height:43px;background:#ebebeb"></div>
<div class="abs" style="left:1774px;top:903px;width:1px;height:43px;background:#ebebeb"></div>
<div class="t" style="left:1511px;top:911.69px;font-size:11px;line-height:11px;font-weight:normal;color:#303030;">Added to cart</div>
<div class="t" style="left:1511px;top:929.16px;font-size:12.8px;line-height:12.8px;font-weight:normal;color:#303030;"><b>0.84%</b><span style="color:#616161;margin-left:6px">57</span></div>
<div class="t" style="left:1649px;top:911.69px;font-size:11px;line-height:11px;font-weight:normal;color:#303030;">Reached checkout</div>
<div class="t" style="left:1649px;top:929.16px;font-size:12.8px;line-height:12.8px;font-weight:normal;color:#303030;"><b>0.82%</b><span style="color:#616161;margin-left:6px">56</span></div>
<div class="t" style="left:1785px;top:911.69px;font-size:11px;line-height:11px;font-weight:normal;color:#303030;">Completed che...</div>
<div class="t" style="left:1785px;top:929.16px;font-size:12.8px;line-height:12.8px;font-weight:normal;color:#303030;"><b>0.25%</b><span style="color:#616161;margin-left:6px">17</span></div>
<div class="abs" style="left:1514px;top:886px;width:281px;height:47px;background:rgba(250,250,250,.3);border-radius:5px;box-shadow:0 0 0 1px rgba(0,0,0,.035)"></div>
<div class="t" style="left:1525px;top:894.67px;font-size:12.2px;line-height:12.2px;font-weight:normal;color:#c6c6c6;">Press the "Prnt Scrn" on your keyboard to take a</div>
<div class="t" style="left:1525px;top:911.69px;font-size:11px;line-height:11px;font-weight:normal;color:rgba(190,190,190,.6);">screenshot</div>
<div class="abs" style="left:1905px;top:50px;width:14px;height:896px;background:#f1f1f1;border-top-right-radius:10px"></div>
<div class="abs" style="left:1912px;top:62px;width:6px;height:283px;background:#b8b8b8;border-radius:3px"></div>
<svg class="abs" style="left:1911px;top:52px" width="9" height="7"><path d="M1 5.5 L4.5 1.5 L8 5.5 Z" fill="#a8a8a8"/></svg>
<svg class="abs" style="left:1911px;top:936px" width="9" height="7"><path d="M1 1 L4.5 5.5 L8 1 Z" fill="#a0a0a0"/></svg>
<div class="abs" style="left:0px;top:945px;width:1919px;height:1px;background:#a8a8a8"></div>

</body></html>
